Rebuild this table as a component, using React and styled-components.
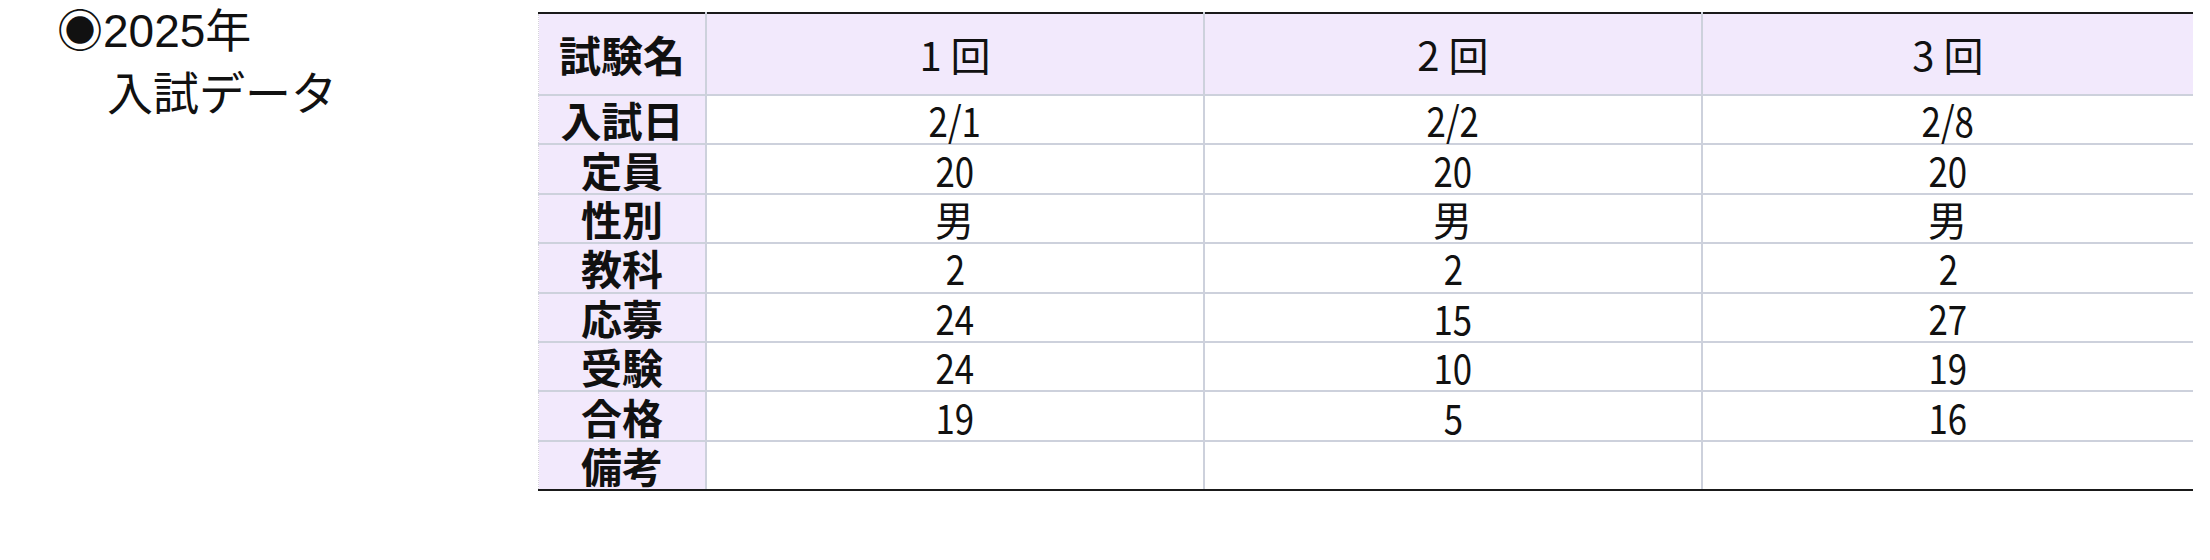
import styled, { createGlobalStyle } from 'styled-components';

const GlobalStyle = createGlobalStyle`
  html, body {
    margin: 0;
    padding: 0;
    background: #ffffff;
  }
  body {
    font-family: 'Liberation Sans', 'Noto Sans CJK JP', sans-serif;
    color: #111111;
  }
`;

const colors = {
  lavender: '#f2e9fc',
  grid: '#cdd1dc',
  rule: '#1a1a1a',
  ink: '#111111',
};

const Page = styled.div`
  display: flex;
  align-items: flex-start;
  width: 2210px;
  height: 560px;
  padding-right: 17px;
  box-sizing: border-box;
`;

const Heading = styled.h2`
  flex: 0 0 538px;
  box-sizing: border-box;
  margin: 0;
  padding-left: 57px;
  font-family: 'Liberation Sans', 'Noto Sans CJK JP', sans-serif;
  font-size: 46px;
  font-weight: 400;
  line-height: 63px;
  color: ${colors.ink};
`;

const HeadingLine = styled.span`
  display: block;
  padding-left: ${(p) => (p.$indent ? '50px' : '0')};
  white-space: nowrap;
`;

const DataTable = styled.table`
  flex: 1;
  margin-top: 12px;
  border-collapse: collapse;
  table-layout: fixed;
  font-family: 'Noto Sans CJK JP', sans-serif;
  color: ${colors.ink};
  border-top: 2px solid ${colors.rule};
  border-bottom: 2px solid ${colors.rule};
`;

const HeadRow = styled.tr`
  height: 82px;
  background: ${colors.lavender};
`;

const BodyRow = styled.tr`
  height: 49.4px;

  &:last-child > * {
    border-bottom: 2px solid ${colors.rule};
  }
`;

const LabelCell = styled.th`
  width: 166px;
  padding: 0;
  background: ${colors.lavender};
  font-size: ${(p) => (p.$head ? '42px' : '41px')};
  font-weight: 700;
  line-height: 1;
  text-align: center;
  white-space: nowrap;
  border-left: 1px dotted #d6d3dc;
  border-right: 2px solid ${colors.grid};
  border-bottom: 2px solid ${colors.grid};
`;

const RoundCell = styled.th`
  padding: 0;
  font-size: 40px;
  font-weight: 400;
  line-height: 1;
  text-align: center;
  white-space: pre;
  border-right: 2px solid ${colors.grid};
  border-bottom: 2px solid ${colors.grid};

  &:last-child {
    border-right: none;
  }
`;

const ValueCell = styled.td`
  padding: 0;
  font-size: 41px;
  font-weight: 400;
  line-height: 1;
  text-align: center;
  border-right: 2px solid ${colors.grid};
  border-bottom: 2px solid ${colors.grid};

  &:last-child {
    border-right: none;
  }
`;

// digits in the source font are narrow; kanji stay square
const Narrow = styled.span`
  display: inline-block;
  transform: scaleX(${(p) => (p.$kanji ? 0.95 : 0.85)});
  transform-origin: center;
`;

const rounds = ['1 回', '2 回', '3 回'];

const rows = [
  { label: '入試日', values: ['2/1', '2/2', '2/8'] },
  { label: '定員', values: ['20', '20', '20'] },
  { label: '性別', values: ['男', '男', '男'] },
  { label: '教科', values: ['2', '2', '2'] },
  { label: '応募', values: ['24', '15', '27'] },
  { label: '受験', values: ['24', '10', '19'] },
  { label: '合格', values: ['19', '5', '16'] },
  { label: '備考', values: ['', '', ''] },
];

export default function App() {
  return (
    <>
      <GlobalStyle />
      <Page>
        <Heading>
          <HeadingLine>◉2025年</HeadingLine>
          <HeadingLine $indent>入試データ</HeadingLine>
        </Heading>
        <DataTable>
          <colgroup>
            <col style={{ width: 166 }} />
            <col />
            <col />
            <col />
          </colgroup>
          <thead>
            <HeadRow>
              <LabelCell $head>試験名</LabelCell>
              {rounds.map((r) => (
                <RoundCell key={r}>{r}</RoundCell>
              ))}
            </HeadRow>
          </thead>
          <tbody>
            {rows.map((row) => (
              <BodyRow key={row.label}>
                <LabelCell scope="row">{row.label}</LabelCell>
                {row.values.map((v, i) => (
                  <ValueCell key={i}>
                    {v && <Narrow $kanji={!/\d/.test(v)}>{v}</Narrow>}
                  </ValueCell>
                ))}
              </BodyRow>
            ))}
          </tbody>
        </DataTable>
      </Page>
    </>
  );
}
